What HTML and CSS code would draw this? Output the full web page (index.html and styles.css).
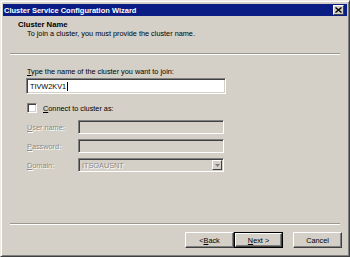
FILE: index.html
```html
<!DOCTYPE html>
<html>
<head>
<meta charset="utf-8">
<link rel="stylesheet" href="styles.css">
</head>
<body>
<div class="window">
  <div class="titlebar">
    <span class="title">Cluster Service Configuration Wizard</span>
    <span class="close"><svg width="7" height="6" viewBox="0 0 7 6"><path d="M0.5 0.5 L6.5 5.5 M6.5 0.5 L0.5 5.5" stroke="#000" stroke-width="1.4"/></svg></span>
  </div>
  <div class="header">
    <div class="heading">Cluster Name</div>
    <div class="subheading">To join a cluster, you must provide the cluster name.</div>
  </div>
  <div class="sep sep-top"></div>
  <div class="body">
    <div class="label"><u>T</u>ype the name of the cluster you want to join:</div>
    <div class="textbox">TIVW2KV1<span class="caret"></span></div>
    <div class="check-row">
      <span class="checkbox"></span>
      <span><u>C</u>onnect to cluster as:</span>
    </div>
    <div class="fields">
      <span class="dlabel"><u>U</u>ser name:</span>
      <span class="dbox"></span>
      <span class="dlabel"><u>P</u>assword:</span>
      <span class="dbox"></span>
      <span class="dlabel"><u>D</u>omain:</span>
      <span class="dbox combo"><span class="dtext">ITSOAUSNT</span><span class="drop"><svg width="5" height="3" viewBox="0 0 5 3"><path d="M0 0 H5 L2.5 3 Z" fill="#808080"/></svg></span></span>
    </div>
  </div>
  <div class="footer">
    <div class="sep sep-bottom"></div>
    <div class="buttons">
      <span class="btn">&lt; <u>B</u>ack</span>
      <span class="btn default"><span class="inner"><u>N</u>ext &gt;</span></span>
      <span class="btn cancel">Cancel</span>
    </div>
  </div>
</div>
</body>
</html>
```
FILE: styles.css
```css
html, body {
  margin: 0;
  padding: 0;
  background: #d4d0c8;
}
body {
  font-family: "Liberation Sans", Arial, sans-serif;
  font-size: 7.3px;
  color: #000;
}
.window {
  width: 350px;
  height: 257px;
  box-sizing: border-box;
  background: #d4d0c8;
  border: 1px solid;
  border-color: #ecebe6 #404040 #404040 #ecebe6;
  box-shadow: inset 1px 1px #fff, inset -1px -1px #808080;
  padding: 3px 2px 2px 2px;
  display: flex;
  flex-direction: column;
}
.titlebar {
  height: 12px;
  background: #0a1d84;
  color: #fff;
  font-weight: bold;
  font-size: 7.5px;
  display: flex;
  align-items: center;
  justify-content: space-between;
  padding: 0 3px 0 1px;
}
.close {
  width: 9px;
  height: 8px;
  background: #d4d0c8;
  border: 1px solid;
  border-color: #fff #404040 #404040 #fff;
  display: flex;
  align-items: center;
  justify-content: center;
}
.header {
  padding: 5px 0 0 15px;
}
.heading {
  font-weight: bold;
  font-size: 7.7px;
  line-height: 8px;
}
.subheading {
  line-height: 9px;
  margin-left: 9px;
}
.sep {
  height: 0;
  border-top: 1px solid #9a978f;
  border-bottom: 1px solid #fff;
}
.sep-top {
  margin: 15px 7px 0 7px;
}
.body {
  padding-left: 23px;
}
.label {
  margin-top: 13px;
  line-height: 8px;
  padding-left: 1px;
}
.textbox {
  margin-top: 2px;
  width: 200px;
  height: 16px;
  box-sizing: border-box;
  background: #fff;
  border: 1px solid;
  border-color: #808080 #fff #fff #808080;
  box-shadow: inset 1px 1px #404040, inset -1px -1px #d4d0c8;
  padding: 0 3px;
  display: flex;
  align-items: center;
}
.caret {
  display: inline-block;
  width: 1px;
  height: 9px;
  background: #000;
  margin-left: 1px;
}
.check-row {
  margin-top: 9px;
  display: flex;
  align-items: center;
  gap: 6px;
  padding-left: 1px;
}
.checkbox {
  width: 10px;
  height: 10px;
  box-sizing: border-box;
  background: #fff;
  border: 1px solid;
  border-color: #808080 #fff #fff #808080;
  box-shadow: inset 1px 1px #404040, inset -1px -1px #d4d0c8;
}
.fields {
  margin-top: 7px;
  display: grid;
  grid-template-columns: 52px 146px;
  grid-auto-rows: 14px;
  row-gap: 5px;
  align-items: center;
}
.dlabel {
  color: #8d8a84;
  text-shadow: 1px 1px 0 #fff;
  padding-left: 1px;
}
.dbox {
  height: 14px;
  box-sizing: border-box;
  background: #d4d0c8;
  border: 1px solid;
  border-color: #808080 #fff #fff #808080;
  box-shadow: inset 1px 1px #404040, inset -1px -1px #d4d0c8;
  display: flex;
  align-items: center;
  justify-content: space-between;
}
.dtext {
  color: #8d8a84;
  text-shadow: 1px 1px 0 #fff;
  padding-left: 3px;
}
.drop {
  width: 10px;
  height: 10px;
  box-sizing: border-box;
  margin-right: 1px;
  background: #d4d0c8;
  border: 1px solid;
  border-color: #fff #404040 #404040 #fff;
  display: flex;
  align-items: center;
  justify-content: center;
}
.footer {
  margin-top: auto;
}
.sep-bottom {
  margin: 0 7px;
}
.buttons {
  display: flex;
  justify-content: flex-end;
  padding: 7px 5px 6px 0;
}
.btn {
  width: 49px;
  height: 16px;
  box-sizing: border-box;
  background: #d4d0c8;
  border: 1px solid;
  border-color: #fff #404040 #404040 #fff;
  box-shadow: inset -1px -1px #808080;
  display: flex;
  align-items: center;
  justify-content: center;
}
.btn.default {
  border: 1px solid #000;
  box-shadow: none;
  padding: 0;
}
.btn.default .inner {
  flex: 1;
  align-self: stretch;
  display: flex;
  align-items: center;
  justify-content: center;
  border: 1px solid;
  border-color: #fff #404040 #404040 #fff;
  box-shadow: inset -1px -1px #808080;
}
.btn.cancel {
  margin-left: 10px;
}
```
